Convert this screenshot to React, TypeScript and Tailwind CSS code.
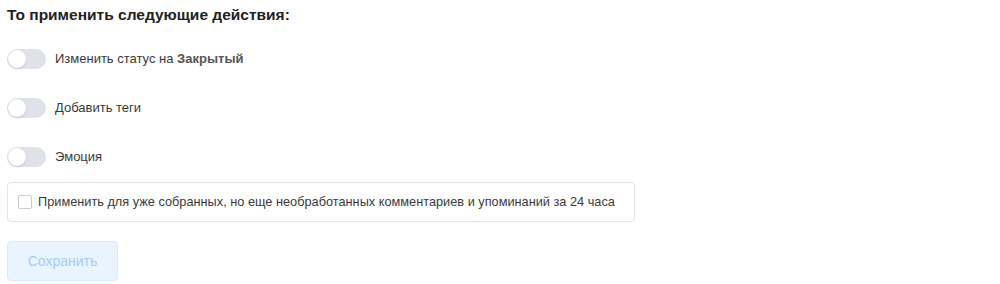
import { useState } from 'react';

type Action = {
  id: string;
  label: string;
  value?: string;
};

const ACTIONS: Action[] = [
  { id: 'status', label: 'Изменить статус на', value: 'Закрытый' },
  { id: 'tags', label: 'Добавить теги' },
  { id: 'emotion', label: 'Эмоция' },
];

function Toggle({ checked, onChange }: { checked: boolean; onChange: () => void }) {
  return (
    <button
      type="button"
      onClick={onChange}
      className={
        checked
          ? 'relative h-[20px] w-[39px] shrink-0 rounded-full bg-[#3b95f5]'
          : 'relative h-[20px] w-[39px] shrink-0 rounded-full bg-[#dfe2e8]'
      }
    >
      <span
        className={
          checked
            ? 'absolute top-[1px] left-[20px] h-[18px] w-[18px] rounded-full bg-white shadow-[0_1px_2px_rgba(0,0,0,0.15)]'
            : 'absolute top-[1px] left-[1px] h-[18px] w-[18px] rounded-full bg-white shadow-[0_1px_2px_rgba(0,0,0,0.15)]'
        }
      />
    </button>
  );
}

export default function App() {
  const [enabled, setEnabled] = useState<Record<string, boolean>>({});
  const [applyOld, setApplyOld] = useState(false);

  return (
    <div className="h-[284px] w-[1000px] bg-white pl-[7px] pt-[6px] font-['Liberation_Sans',sans-serif] text-[#333]">
      <h2 className="text-[15.5px] leading-[18px] font-bold text-[#222]">
        То применить следующие действия:
      </h2>

      <div className="mt-[25px] flex flex-col gap-[29px]">
        {ACTIONS.map((action) => (
          <div key={action.id} className="flex h-[20px] items-center gap-[9px]">
            <Toggle
              checked={!!enabled[action.id]}
              onChange={() => setEnabled((s) => ({ ...s, [action.id]: !s[action.id] }))}
            />
            <span className="text-[13px] text-[#3a3a3a]">
              {action.label}
              {action.value && <b className="font-bold text-[#555]"> {action.value}</b>}
            </span>
          </div>
        ))}
      </div>

      <label className="mt-[15px] flex h-[40px] w-[628px] cursor-pointer items-center gap-[6px] rounded-[4px] border border-[#e1e4e9] px-[10px]">
        <input
          type="checkbox"
          checked={applyOld}
          onChange={() => setApplyOld(!applyOld)}
          className="h-[14px] w-[14px] shrink-0 appearance-none rounded-[2px] border border-[#c9ccd2] bg-white"
        />
        <span className="text-[12.75px] whitespace-nowrap text-[#3a3a3a]">
          Применить для уже собранных, но еще необработанных комментариев и упоминаний за 24 часа
        </span>
      </label>

      <button
        type="button"
        disabled
        className="mt-[19px] h-[40px] w-[111px] rounded-[4px] border border-[#d9eaff] bg-[#eaf4ff] text-[14px] text-[#a3ccfa]"
      >
        Сохранить
      </button>
    </div>
  );
}
